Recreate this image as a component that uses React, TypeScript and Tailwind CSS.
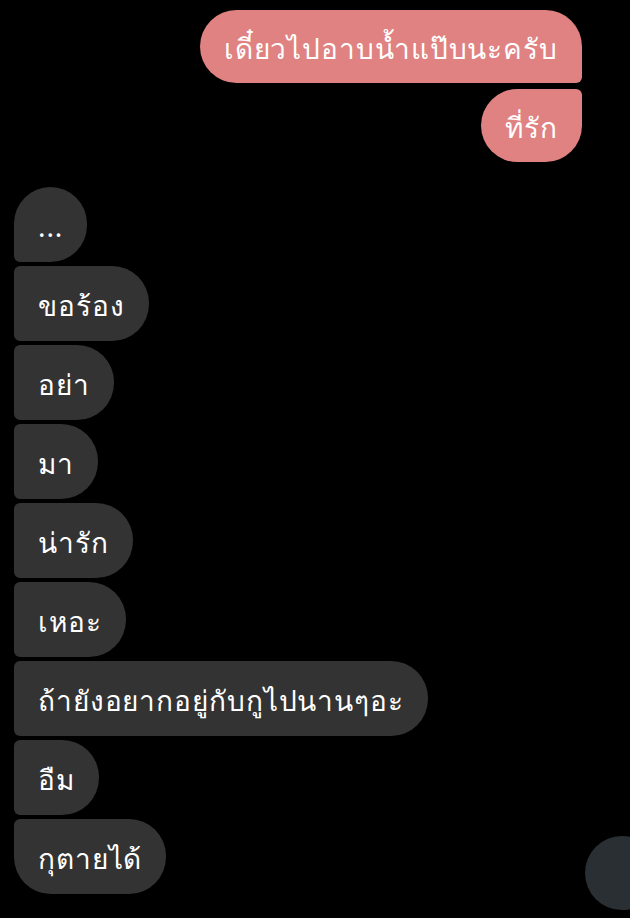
import React from 'react';

const received = [
  { text: '...', shape: 'rounded-[37px] rounded-bl-[6px]' },
  { text: 'ขอร้อง', shape: 'rounded-[37px] rounded-l-[6px]' },
  { text: 'อย่า', shape: 'rounded-[37px] rounded-l-[6px]' },
  { text: 'มา', shape: 'rounded-[37px] rounded-l-[6px]' },
  { text: 'น่ารัก', shape: 'rounded-[37px] rounded-l-[6px]' },
  { text: 'เหอะ', shape: 'rounded-[37px] rounded-l-[6px]' },
  { text: 'ถ้ายังอยากอยู่กับกูไปนานๆอะ', shape: 'rounded-[37px] rounded-l-[6px]' },
  { text: 'อืม', shape: 'rounded-[37px] rounded-l-[6px]' },
  { text: 'กุตายได้', shape: 'rounded-[37px] rounded-tl-[6px]' },
];

export default function App() {
  return (
    <div
      className="relative w-[630px] h-[918px] overflow-hidden bg-black text-white tracking-[0.9px]"
      style={{ fontFamily: '"Noto Sans", "Noto Sans CJK SC", sans-serif' }}
    >
      <div className="flex flex-col items-end gap-[6px] pt-[10px] pr-[48px]">
        <div className="h-[73px] flex items-center pt-[2px] px-[24px] bg-[#e08282] text-[28px] rounded-[37px] rounded-br-[6px]">
          เดี๋ยวไปอาบน้ำแป๊บนะครับ
        </div>
        <div className="h-[73px] flex items-center pt-[2px] px-[24px] bg-[#e08282] text-[28px] rounded-[37px] rounded-tr-[6px]">
          ที่รัก
        </div>
      </div>

      <div className="flex flex-col items-start gap-[4px] mt-[25px] pl-[14px]">
        {received.map((m, i) => (
          <div
            key={i}
            className={`h-[75px] flex items-center pt-[2px] px-[24px] bg-[#333333] text-[28px] ${m.shape}`}
          >
            {m.text}
          </div>
        ))}
      </div>

      <div className="absolute left-[585px] top-[836px] w-[74px] h-[74px] rounded-full bg-[#2a2f33]" />
    </div>
  );
}
